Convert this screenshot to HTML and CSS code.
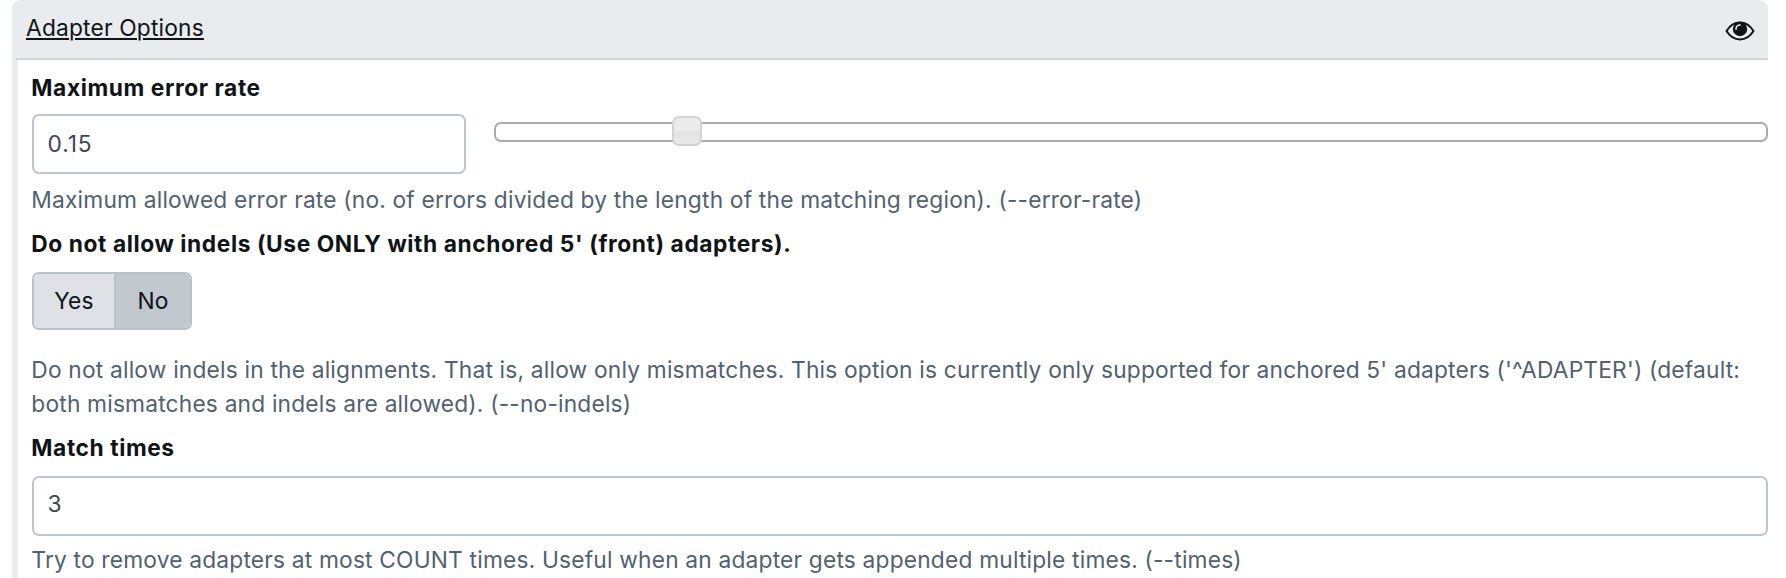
FILE: index.html
```html
<!DOCTYPE html>
<html lang="en">
<head>
<meta charset="utf-8">
<title>Adapter Options</title>
<link rel="stylesheet" href="styles.css">
</head>
<body>
<section class="card">
  <header class="card-header">
    <a class="card-title">Adapter Options</a>
    <svg class="eye" viewBox="0 0 30 20">
      <path d="M1.5 10C5 4.3 9.6 1.6 15 1.6S25 4.3 28.5 10C25 15.7 20.4 18.4 15 18.4S5 15.7 1.5 10Z" fill="none" stroke="currentColor" stroke-width="2"/>
      <circle cx="15" cy="8" r="7.2" fill="currentColor"/>
      <path d="M11 8.2C11 5.6 12.6 4 15.2 4" class="eye-glint"/>
    </svg>
  </header>
  <div class="card-body">
    <div class="label">Maximum error rate</div>
    <div class="range-row">
      <div class="field short">0.15</div>
      <div class="slider"><span class="handle"></span></div>
    </div>
    <div class="help">Maximum allowed error rate (no. of errors divided by the length of the matching region). (--error-rate)</div>
    <div class="label second">Do not allow indels (Use ONLY with anchored 5' (front) adapters).</div>
    <div class="toggle"><span class="option yes">Yes</span><span class="option no">No</span></div>
    <div class="help indels">Do not allow indels in the alignments. That is, allow only mismatches. This option is currently only supported for anchored 5' adapters ('^ADAPTER') (default:<br>both mismatches and indels are allowed). (--no-indels)</div>
    <div class="label second">Match times</div>
    <div class="field times">3</div>
    <div class="help last">Try to remove adapters at most COUNT times. Useful when an adapter gets appended multiple times. (--times)</div>
  </div>
</section>
</body>
</html>
```
FILE: styles.css
```css
* { box-sizing: border-box; }
body {
  margin: 0;
  height: 578px;
  overflow: hidden;
  background: #fff;
  color: #101417;
  font: 22.75px/34px Inter, "Liberation Sans", sans-serif;
  font-feature-settings: "calt" 0;
  letter-spacing: 0.185px;
}
.card {
  width: 1756px;
  height: 590px;
  margin-left: 12px;
  background: linear-gradient(#e8ecef, #e8ecef) left / 6px 100% no-repeat;
  border-radius: 9px 9px 0 0;
}
.card-header {
  display: flex;
  justify-content: space-between;
  height: 60px;
  padding: 11px 13px 0 14px;
  border-radius: 9px 9px 0 0;
  background: linear-gradient(#d0d3da, #d0d3da) 4px 58px / 100% 2px no-repeat, #e8ecef;
}
.card-title {
  text-decoration: underline;
  text-decoration-thickness: 2px;
  text-underline-offset: 2px;
}
.eye { width: 30px; height: 20px; margin-top: 10px; }
.eye-glint { fill: none; stroke: #e8ecef; stroke-width: 1.5; stroke-linecap: round; }
.card-body { padding: 11px 0 0 20px; }
.label { height: 34px; margin-left: -0.7px; font-weight: 700; letter-spacing: 0.58px; white-space: nowrap; }
.second { margin-top: 10px; }
.range-row { display: flex; gap: 28px; margin-top: 9px; }
.field {
  height: 60px;
  padding: 10px 13.5px;
  border: 2px solid #bdc6d0;
  border-radius: 7px;
  color: #3c4855;
}
.short { width: 434px; padding-top: 11px; letter-spacing: 0.9px; }
.slider {
  flex: 1;
  height: 20px;
  margin-top: 8px;
  padding-left: 176px;
  border: 2px solid #aaa;
  border-radius: 7px;
}
.handle {
  display: block;
  width: 30px;
  height: 30px;
  margin-top: -8px;
  border: 2px solid #d3d3d3;
  border-radius: 7px;
  background: linear-gradient(#ebebeb 50%, #e4e4e4 50%, #e8e8e8);
}
.help { margin-top: 9px; margin-left: -0.7px; color: #516170; white-space: nowrap; }
.toggle {
  display: flex;
  width: 160px;
  height: 58px;
  margin-top: 11px;
  border: 2px solid #b8c2cb;
  border-radius: 7px;
  overflow: hidden;
}
.option { padding-top: 10px; text-align: center; }
.yes { width: 82px; border-right: 2px solid #b8c2cb; background: #dee2e6; }
.no { flex: 1; background: #c1c8ce; }
.indels { margin-top: 23px; }
.times { margin-top: 11px; padding-top: 9px; }
.last { margin-top: 7px; }
```
